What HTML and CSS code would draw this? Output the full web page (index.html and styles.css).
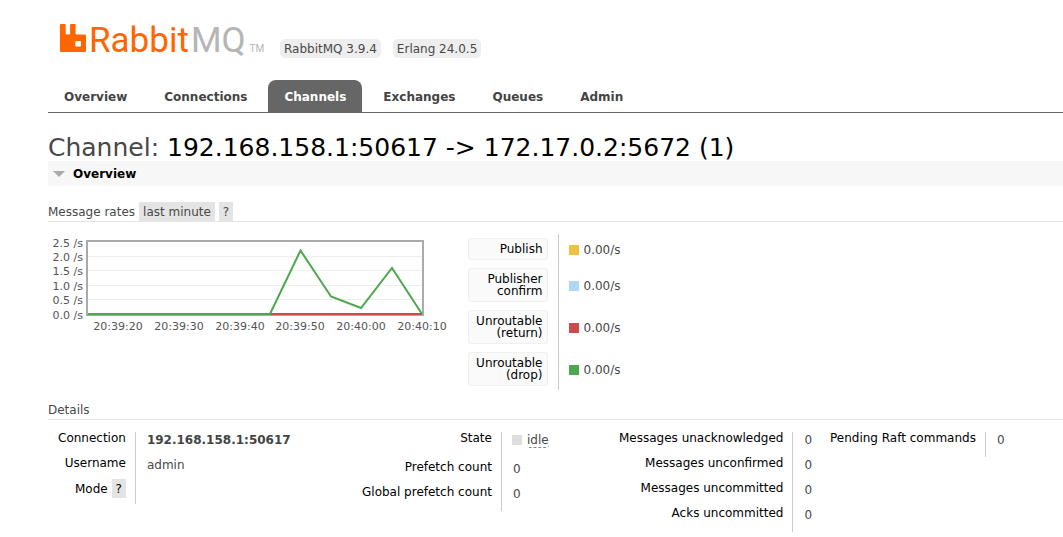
FILE: index.html
```html
<!DOCTYPE html>
<html lang="en">
<head>
<meta charset="utf-8">
<title>RabbitMQ Management</title>
<link rel="stylesheet" href="styles.css">
</head>
<body>
<header class="header">
  <a class="logo" href="#" aria-label="RabbitMQ">
    <svg class="logo-mark" viewBox="0 0 26 28" aria-hidden="true">
      <path fill="#f60" fill-rule="evenodd" d="M1 0h3.700q1 0 1 1v8.500q0 1 1 1h2.400q1 0 1-1V1q0-1 1-1h3.500q1 0 1 1v8.500q0 1 1 1H25q1 0 1 1V27q0 1-1 1H1q-1 0-1-1V1q0-1 1-1zM16.300 17q-1 0-1 1v3.500q0 1 1 1h3.700q1 0 1-1v-3.500q0-1-1-1z"/>
    </svg>
    <span class="logo-rabbit">Rabbit</span><span class="logo-mq">MQ</span><span class="logo-tm">TM</span>
  </a>
  <span class="version">RabbitMQ 3.9.4</span>
  <span class="version">Erlang 24.0.5</span>
</header>
<nav class="tabs">
  <a href="#">Overview</a>
  <a href="#">Connections</a>
  <a href="#" class="selected" aria-current="page">Channels</a>
  <a href="#">Exchanges</a>
  <a href="#">Queues</a>
  <a href="#">Admin</a>
</nav>
<main class="main">
  <h1>Channel: <b>192.168.158.1:50617 -&gt; 172.17.0.2:5672 (1)</b></h1>
  <h2><button class="section-toggle" type="button" aria-expanded="true">Overview</button></h2>

  <h3 class="rates-title">Message rates <button class="chip" type="button">last minute</button> <button class="chip" type="button">?</button></h3>
  <div class="rates">
    <svg class="chart" viewBox="0 0 404 104" role="img" aria-label="Message rates, last minute">
      <g stroke="#eee" stroke-width="1">
        <path d="M40 22.500H375M40 36.500H375M40 51.500H375M40 65.500H375"/>
      </g>
      <rect x="39" y="7" width="336" height="74" fill="none" stroke="#aaa" stroke-width="2"/>
      <path d="M222 80H374" stroke="#cb4b4b" stroke-width="2"/>
      <path d="M40 80H222L252.500 16.500L283 62.500L313 74L344 34L374 80" fill="none" stroke="#4da74d" stroke-width="2"/>
      <g class="axis" text-anchor="end">
        <text x="35" y="13">2.5 /s</text>
        <text x="35" y="27">2.0 /s</text>
        <text x="35" y="41">1.5 /s</text>
        <text x="35" y="56">1.0 /s</text>
        <text x="35" y="70">0.5 /s</text>
        <text x="35" y="85">0.0 /s</text>
      </g>
      <g class="axis" text-anchor="middle">
        <text x="70" y="96">20:39:20</text>
        <text x="131" y="96">20:39:30</text>
        <text x="192" y="96">20:39:40</text>
        <text x="252" y="96">20:39:50</text>
        <text x="313" y="96">20:40:00</text>
        <text x="374" y="96">20:40:10</text>
      </g>
    </svg>
    <table class="legend">
      <tr><th scope="row"><span class="series">Publish</span></th><td><i class="swatch publish"></i>0.00/s</td></tr>
      <tr><th scope="row"><span class="series">Publisher confirm</span></th><td><i class="swatch confirm"></i>0.00/s</td></tr>
      <tr><th scope="row"><span class="series">Unroutable (return)</span></th><td><i class="swatch returned"></i>0.00/s</td></tr>
      <tr><th scope="row"><span class="series">Unroutable (drop)</span></th><td><i class="swatch dropped"></i>0.00/s</td></tr>
    </table>
  </div>

  <h3>Details</h3>
  <div class="details">
    <div class="facts-group wide">
      <table class="facts">
        <tr><th scope="row">Connection</th><td><a href="#">192.168.158.1:50617</a></td></tr>
        <tr><th scope="row">Username</th><td>admin</td></tr>
        <tr class="mode"><th scope="row">Mode <button class="chip help" type="button">?</button></th><td></td></tr>
      </table>
    </div>
    <div class="facts-group medium">
      <table class="facts">
        <tr class="state"><th scope="row">State</th><td><i class="swatch idle"></i><abbr>idle</abbr></td></tr>
        <tr><th scope="row">Prefetch count</th><td>0</td></tr>
        <tr><th scope="row">Global prefetch count</th><td>0</td></tr>
      </table>
    </div>
    <div class="facts-group narrow">
      <table class="facts">
        <tr><th scope="row">Messages unacknowledged</th><td>0</td></tr>
        <tr><th scope="row">Messages unconfirmed</th><td>0</td></tr>
        <tr><th scope="row">Messages uncommitted</th><td>0</td></tr>
        <tr><th scope="row">Acks uncommitted</th><td>0</td></tr>
      </table>
    </div>
    <div class="facts-group">
      <table class="facts">
        <tr><th scope="row">Pending Raft commands</th><td>0</td></tr>
      </table>
    </div>
  </div>
</main>
</body>
</html>
```
FILE: styles.css
```css
* { box-sizing: border-box; }
body {
  margin: 0;
  padding-left: 48px;
  background: #fff;
  color: #484848;
  font: 12px/16px Verdana, "DejaVu Sans", sans-serif;
}
a { color: #444; text-decoration: none; }
button { font: inherit; color: inherit; border: 0; cursor: pointer; }

.header {
  display: flex;
  align-items: flex-end;
  gap: 12px;
  height: 80px;
  padding: 0 0 22px 12px;
}
.logo {
  display: flex;
  align-items: baseline;
  width: 208px;
  margin-bottom: 1px;
  font: 35px/32px Roboto, sans-serif;
  white-space: nowrap;
}
.logo-mark { flex: none; width: 26px; height: 28px; margin-right: 3px; }
.logo-rabbit { color: #f60; }
.logo-mq { margin-left: 2px; color: #b5b5b5; }
.logo-tm { color: #b5b5b5; font: 10px/10px Roboto, sans-serif; margin-left: 4px; }
.version {
  padding: 2px 4px 1px;
  border-radius: 5px;
  background: #eee;
}

.tabs {
  display: flex;
  gap: 5px;
  border-bottom: 1px solid #666;
}
.tabs a {
  padding: 9px 16px 7px;
  border-radius: 8px 8px 0 0;
  font-weight: bold;
}
.tabs .selected { background: #666; color: #fff; }

h1, h2, h3 { margin: 0; font-weight: normal; }
h1 {
  padding-top: 22px;
  font-size: 25px;
  line-height: 26px;
}
h1 b { color: #000; font-weight: normal; }
h2 { background: #f7f7f7; font-size: 12px; }
.section-toggle {
  display: flex;
  align-items: center;
  gap: 8px;
  width: 100%;
  height: 25px;
  padding: 0 5px;
  background: transparent;
  color: #000;
  font-weight: bold;
}
.section-toggle::before {
  content: "";
  border: solid transparent;
  border-width: 6px 6px 0;
  border-top-color: #aaa;
}
h3 {
  font-size: 12px;
  line-height: 16px;
  padding-bottom: 1px;
  border-bottom: 1px solid #e4e4e4;
}
.rates-title { display: flex; gap: 4px; align-items: center; margin-top: 16px; padding: 0; }
.chip { padding: 2px 4px 1px; background: #e4e4e4; line-height: 16px; }

.rates {
  display: flex;
  align-items: flex-start;
  gap: 16px;
  padding: 12px 0;
}
.chart { width: 404px; height: 104px; }
.axis { fill: #545454; font-size: 11px; }
table { border-collapse: collapse; }
th { color: #000; font-weight: normal; text-align: right; }
td { border-left: 1px solid #ccc; }
.legend th { width: 90px; padding: 4px 10px 4px 0; }
.legend td { padding: 2px 10px 0; }
.series {
  display: block;
  padding: 4px;
  border: 1px solid #f0f0f0;
  border-radius: 3px;
  background: #fafafa;
  line-height: 12px;
}
.swatch {
  display: inline-block;
  width: 10px;
  height: 10px;
  margin-right: 5px;
  vertical-align: -1px;
}
.publish { background: #edc240; }
.confirm { background: #afd8f8; }
.returned { background: #cb4b4b; }
.dropped { background: #4da74d; }
.idle { background: #ddd; }

.details { display: flex; padding-top: 12px; }
.wide { min-width: 304px; }
.medium { min-width: 257px; }
.narrow { min-width: 211px; }
.facts tr { height: 25px; }
.facts .state { height: 29px; }
.facts .mode { height: 22px; }
.facts th { padding: 0 9px 0 10px; vertical-align: top; white-space: nowrap; line-height: 12px; }
.facts td { padding: 0 6px 0 11px; vertical-align: top; line-height: 16px; }
.facts .state td { padding-left: 10px; }
.facts a { font-weight: bold; }
.facts .help { margin: -3px 0; }
abbr { border-bottom: 1px dashed #888; border-radius: 3px; }
```
